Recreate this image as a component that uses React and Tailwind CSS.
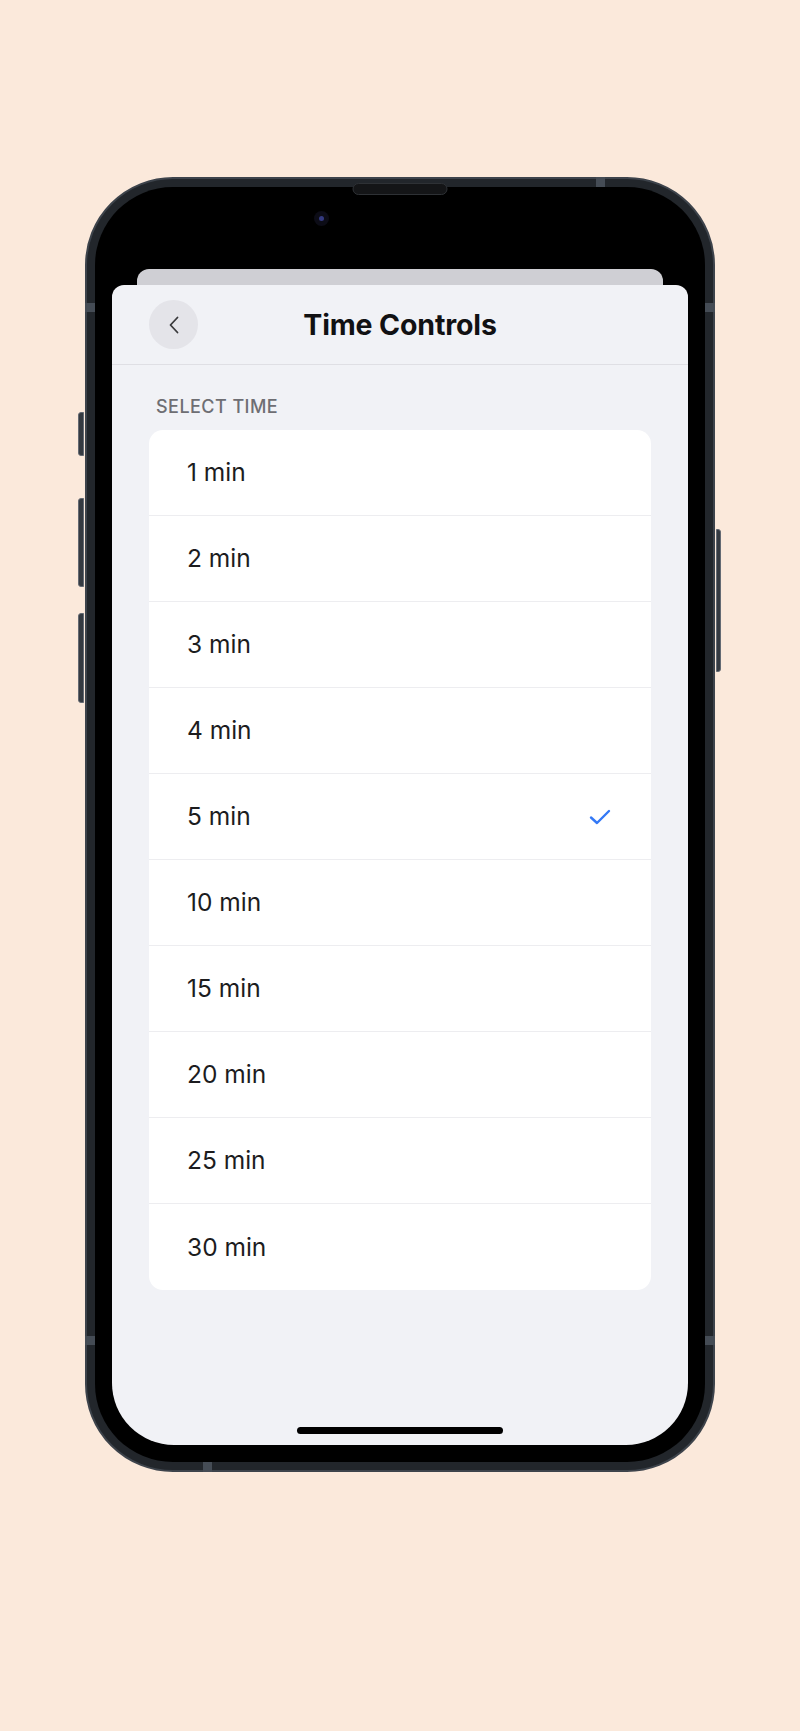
import React, { useState } from 'react';

const times = ['1 min', '2 min', '3 min', '4 min', '5 min', '10 min', '15 min', '20 min', '25 min', '30 min'];

const TimeControls = () => {
  const [selected, setSelected] = useState('5 min');

  return (
    <div className="min-h-[1731px] w-full bg-[#fbe9db] flex justify-center pt-[177px] font-['Inter','Noto_Sans',sans-serif]">
      {/* Phone frame */}
      <div className="relative w-[630px] h-[1295px] rounded-[88px] border-2 border-[#3d434b] bg-[#22262b] p-[8px]">
        {/* Side buttons */}
        <div className="absolute left-[-9px] top-[233px] h-[44px] w-[6px] rounded-l-[3px] border border-[#646a73] bg-[#353a41]" />
        <div className="absolute left-[-9px] top-[319px] h-[89px] w-[6px] rounded-l-[3px] border border-[#646a73] bg-[#353a41]" />
        <div className="absolute left-[-9px] top-[434px] h-[90px] w-[6px] rounded-l-[3px] border border-[#646a73] bg-[#353a41]" />
        <div className="absolute right-[-8px] top-[350px] h-[143px] w-[5px] rounded-r-[3px] border border-[#646a73] bg-[#353a41]" />

        {/* Antenna bands */}
        <div className="absolute left-[-2px] top-[124px] h-[9px] w-[10px] bg-[#454c55]" />
        <div className="absolute right-[-2px] top-[124px] h-[9px] w-[10px] bg-[#454c55]" />
        <div className="absolute left-[-2px] top-[1157px] h-[9px] w-[10px] bg-[#454c55]" />
        <div className="absolute right-[-2px] top-[1157px] h-[9px] w-[10px] bg-[#454c55]" />
        <div className="absolute left-[116px] bottom-[-2px] h-[10px] w-[9px] bg-[#454c55]" />
        <div className="absolute right-[108px] top-[-2px] h-[10px] w-[9px] bg-[#454c55]" />

        {/* Bezel */}
        <div className="h-full rounded-[78px] bg-black p-[17px]">
          {/* Display */}
          <div className="relative h-full rounded-[62px] bg-black overflow-hidden flex flex-col">
            <div className="h-[65px] shrink-0" />
            <div className="mx-[25px] h-[16px] shrink-0 rounded-t-[12px] bg-[#cfcfd4]" />

            {/* Sheet */}
            <div className="flex-1 rounded-t-[12px] bg-[#f1f2f6] flex flex-col">
              {/* Header */}
              <div className="grid grid-cols-[1fr_auto_1fr] items-center h-[80px] px-[37px] border-b border-[#dfdfe4]">
                <button className="w-[49px] h-[49px] rounded-full bg-[#e4e4e9] flex items-center justify-center">
                  <svg width="12" height="18" viewBox="0 0 12 18" fill="none">
                    <path d="M9.5 1.5 L2.5 9 L9.5 16.5" stroke="#3a3a3c" strokeWidth="1.8" strokeLinecap="round" strokeLinejoin="round" />
                  </svg>
                </button>
                <h1 className="text-[28.5px] leading-[34px] font-bold text-[#111113] tracking-[-0.005em]">Time Controls</h1>
                <div />
              </div>

              {/* Content */}
              <div className="px-[37px] pt-[31px]">
                <p className="pl-[7px] text-[18px] leading-[22px] font-medium tracking-[0.025em] text-[#6e6e73]">SELECT TIME</p>

                <div className="mt-[12px] rounded-[14px] bg-white overflow-hidden">
                  {times.map((t, i) => (
                    <button
                      key={t}
                      onClick={() => setSelected(t)}
                      className={`w-full h-[86px] flex items-center justify-between pl-[38px] pr-[40px] text-left ${i < times.length - 1 ? 'border-b border-[#ededf0]' : ''}`}
                    >
                      <span className="text-[24.5px] text-[#1c1c1e]">{t}</span>
                      {selected === t && (
                        <svg width="22" height="16" viewBox="0 0 22 16" fill="none">
                          <path d="M2 8.5 L8 14 L20 2" stroke="#3479f6" strokeWidth="2.4" strokeLinecap="round" strokeLinejoin="round" />
                        </svg>
                      )}
                    </button>
                  ))}
                </div>
              </div>
            </div>

            {/* Home indicator */}
            <div className="absolute bottom-[11px] left-1/2 -translate-x-1/2 w-[206px] h-[7px] rounded-full bg-black" />
          </div>
        </div>

        {/* Speaker and camera */}
        <div className="absolute top-[4px] left-1/2 -translate-x-1/2 w-[95px] h-[12px] rounded-full bg-[#141517] border border-[#2e3135]" />
        <div className="absolute top-[32px] left-[227px] w-[15px] h-[15px] rounded-full bg-[#0c0c16] flex items-center justify-center">
          <div className="w-[5px] h-[5px] rounded-full bg-[#343a80]" />
        </div>
      </div>
    </div>
  );
};

export default TimeControls;
